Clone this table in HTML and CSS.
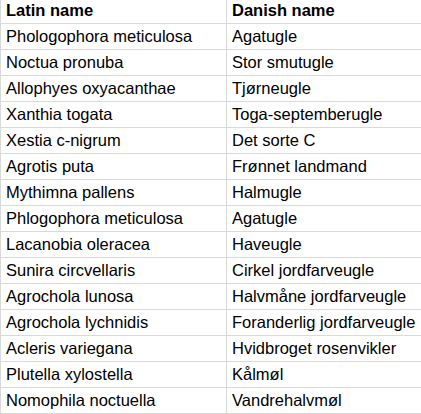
FILE: index.html
```html
<!DOCTYPE html>
<html>
<head>
<meta charset="utf-8">
<link rel="stylesheet" href="styles.css">
</head>
<body>
<table class="grid">
<thead>
<tr><th>Latin name</th><th>Danish name</th></tr>
</thead>
<tbody>
<tr><td>Phologophora meticulosa</td><td>Agatugle</td></tr>
<tr><td>Noctua pronuba</td><td>Stor smutugle</td></tr>
<tr><td>Allophyes oxyacanthae</td><td>Tjørneugle</td></tr>
<tr><td>Xanthia togata</td><td>Toga-septemberugle</td></tr>
<tr><td>Xestia c-nigrum</td><td>Det sorte C</td></tr>
<tr><td>Agrotis puta</td><td>Frønnet landmand</td></tr>
<tr><td>Mythimna pallens</td><td>Halmugle</td></tr>
<tr><td>Phlogophora meticulosa</td><td>Agatugle</td></tr>
<tr><td>Lacanobia oleracea</td><td>Haveugle</td></tr>
<tr><td>Sunira circvellaris</td><td>Cirkel jordfarveugle</td></tr>
<tr><td>Agrochola lunosa</td><td>Halvmåne jordfarveugle</td></tr>
<tr><td>Agrochola lychnidis</td><td>Foranderlig jordfarveugle</td></tr>
<tr><td>Acleris variegana</td><td>Hvidbroget rosenvikler</td></tr>
<tr><td>Plutella xylostella</td><td>Kålmøl</td></tr>
<tr><td>Nomophila noctuella</td><td>Vandrehalvmøl</td></tr>
</tbody>
</table>
</body>
</html>
```
FILE: styles.css
```css
html, body {
  margin: 0;
  padding: 0;
  background: #ffffff;
  overflow: hidden;
}
.grid {
  border-collapse: collapse;
  margin-top: -3px;
  width: 421px;
  table-layout: fixed;
  font-family: "Liberation Sans", Arial, sans-serif;
  font-size: 16.5px;
  color: #000000;
}
.grid th,
.grid td {
  height: 26px;
  padding: 0 5px 3px 5px;
  border: 1px solid #d9d9d9;
  border-top: none;
  border-right: none;
  text-align: left;
  white-space: nowrap;
  box-sizing: border-box;
  vertical-align: bottom;
  line-height: 19px;
}
.grid th {
  font-weight: bold;
}
.grid th:first-child,
.grid td:first-child {
  width: 226px;
}
```
